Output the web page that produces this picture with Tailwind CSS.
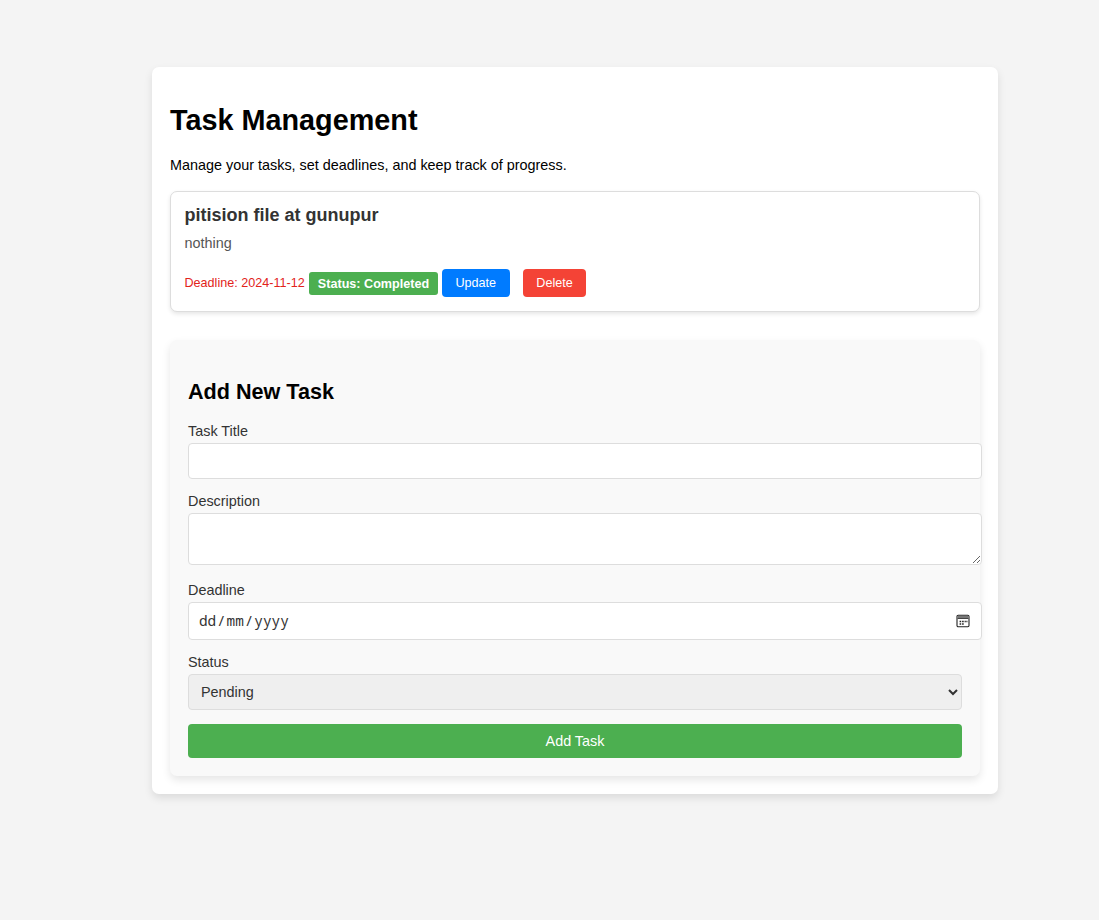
<!DOCTYPE html>
<html lang="en">
<head>
<meta charset="utf-8">
<title>Task Management</title>
<script src="https://cdn.jsdelivr.net/npm/@tailwindcss/browser@4"></script>
</head>
<body class="min-h-screen bg-[#f4f4f4] pt-[67px] text-[14.4px] leading-4 text-black font-['Liberation_Sans',Arial,sans-serif]">
<main class="ml-[152px] h-[727px] w-[846px] rounded-[7px] bg-white px-[18px] pt-[37px] shadow-[0_4px_9px_rgba(0,0,0,0.1)]">
  <h1 class="h-[33px] text-[28.8px] leading-[33px] font-bold">Task Management</h1>
  <p class="mt-5 h-4">Manage your tasks, set deadlines, and keep track of progress.</p>

  <section class="mt-[18px] h-[121px] rounded-[7px] border border-[#ddd] bg-white px-[13.5px] pt-3 shadow-[0_2px_4px_rgba(0,0,0,0.1)]">
    <h3 class="h-[22px] text-[18px] leading-[22px] font-bold text-[#333]">pitision file at gunupur</h3>
    <p class="mt-[9px] h-4 text-[#555]">nothing</p>
    <div class="mt-[18px] flex h-7 items-start text-[12.6px] leading-[14px]">
      <span class="mt-[7px] w-[124.5px] text-[#e2231a]">Deadline: 2024-11-12</span>
      <span class="mt-[3px] h-[23px] w-[129px] rounded-[3px] bg-[#4caf50] text-center leading-[24px] font-bold text-white">Status: Completed</span>
      <button class="ml-1 h-7 w-[68px] rounded-[4px] bg-[#007bff] pr-[0.6px] text-white">Update</button>
      <button class="ml-[13px] h-7 w-[63px] rounded-[4px] bg-[#f44336] text-white">Delete</button>
    </div>
  </section>

  <form class="mt-7 flex h-[436px] flex-col rounded-[7px] bg-[#f9f9f9] px-[18px] pt-[39px] text-[#333] shadow-[0_4px_9px_rgba(0,0,0,0.1)]">
    <h2 class="h-[25px] text-[21.6px] leading-[25px] font-bold text-black">Add New Task</h2>
    <label for="title" class="mt-[19px] h-4">Task Title</label>
    <input id="title" type="text" class="mt-1 h-9 w-[794px] rounded-[4px] border border-[#ddd] bg-white px-[9px]">
    <label for="description" class="mt-[14px] h-4">Description</label>
    <textarea id="description" class="mt-1 h-[52px] w-[794px] rounded-[4px] border border-[#ddd] bg-white p-[9px]"></textarea>
    <span class="mt-[17px] h-4">Deadline</span>
    <div class="mt-1 flex h-[38px] w-[794px] items-center justify-between rounded-[4px] border border-[#ddd] bg-white pr-[11px] pl-[9px]">
      <div class="flex font-['Droid_Sans_Mono','Noto_Sans_Mono','DejaVu_Sans_Mono',monospace]"><span class="px-[0.9px]">dd</span><span>/</span><span class="px-[0.9px]">mm</span><span>/</span><span class="px-[0.9px]">yyyy</span></div>
      <svg class="size-[14px]" viewBox="0 0 14 14" fill="none">
        <rect x="1" y="1.3" width="12" height="11.4" rx="1.2" stroke="#222" stroke-width="1.1"/>
        <path d="M1.5 3h11" stroke="#777" stroke-width="2"/>
        <path d="M1.5 4.5h11" stroke="#444"/>
        <path d="M3.6 7.5h1.6M6.1 7.5h1.6M8.6 7.5h1.2M10.4 7.5h1M3.6 10h1.6M6.1 10h1.6" stroke="#222" stroke-width="1.4"/>
      </svg>
    </div>
    <label for="status" class="mt-[14px] h-4">Status</label>
    <select id="status" class="mt-1 h-9 w-[774px] rounded-[4px] border border-[#ddd] bg-[#efefef] px-2">
      <option>Pending</option>
      <option>Completed</option>
    </select>
    <button type="button" class="mt-[14px] h-[34px] w-[774px] rounded-[4px] bg-[#4caf50] text-white">Add Task</button>
  </form>
</main>
</body>
</html>
